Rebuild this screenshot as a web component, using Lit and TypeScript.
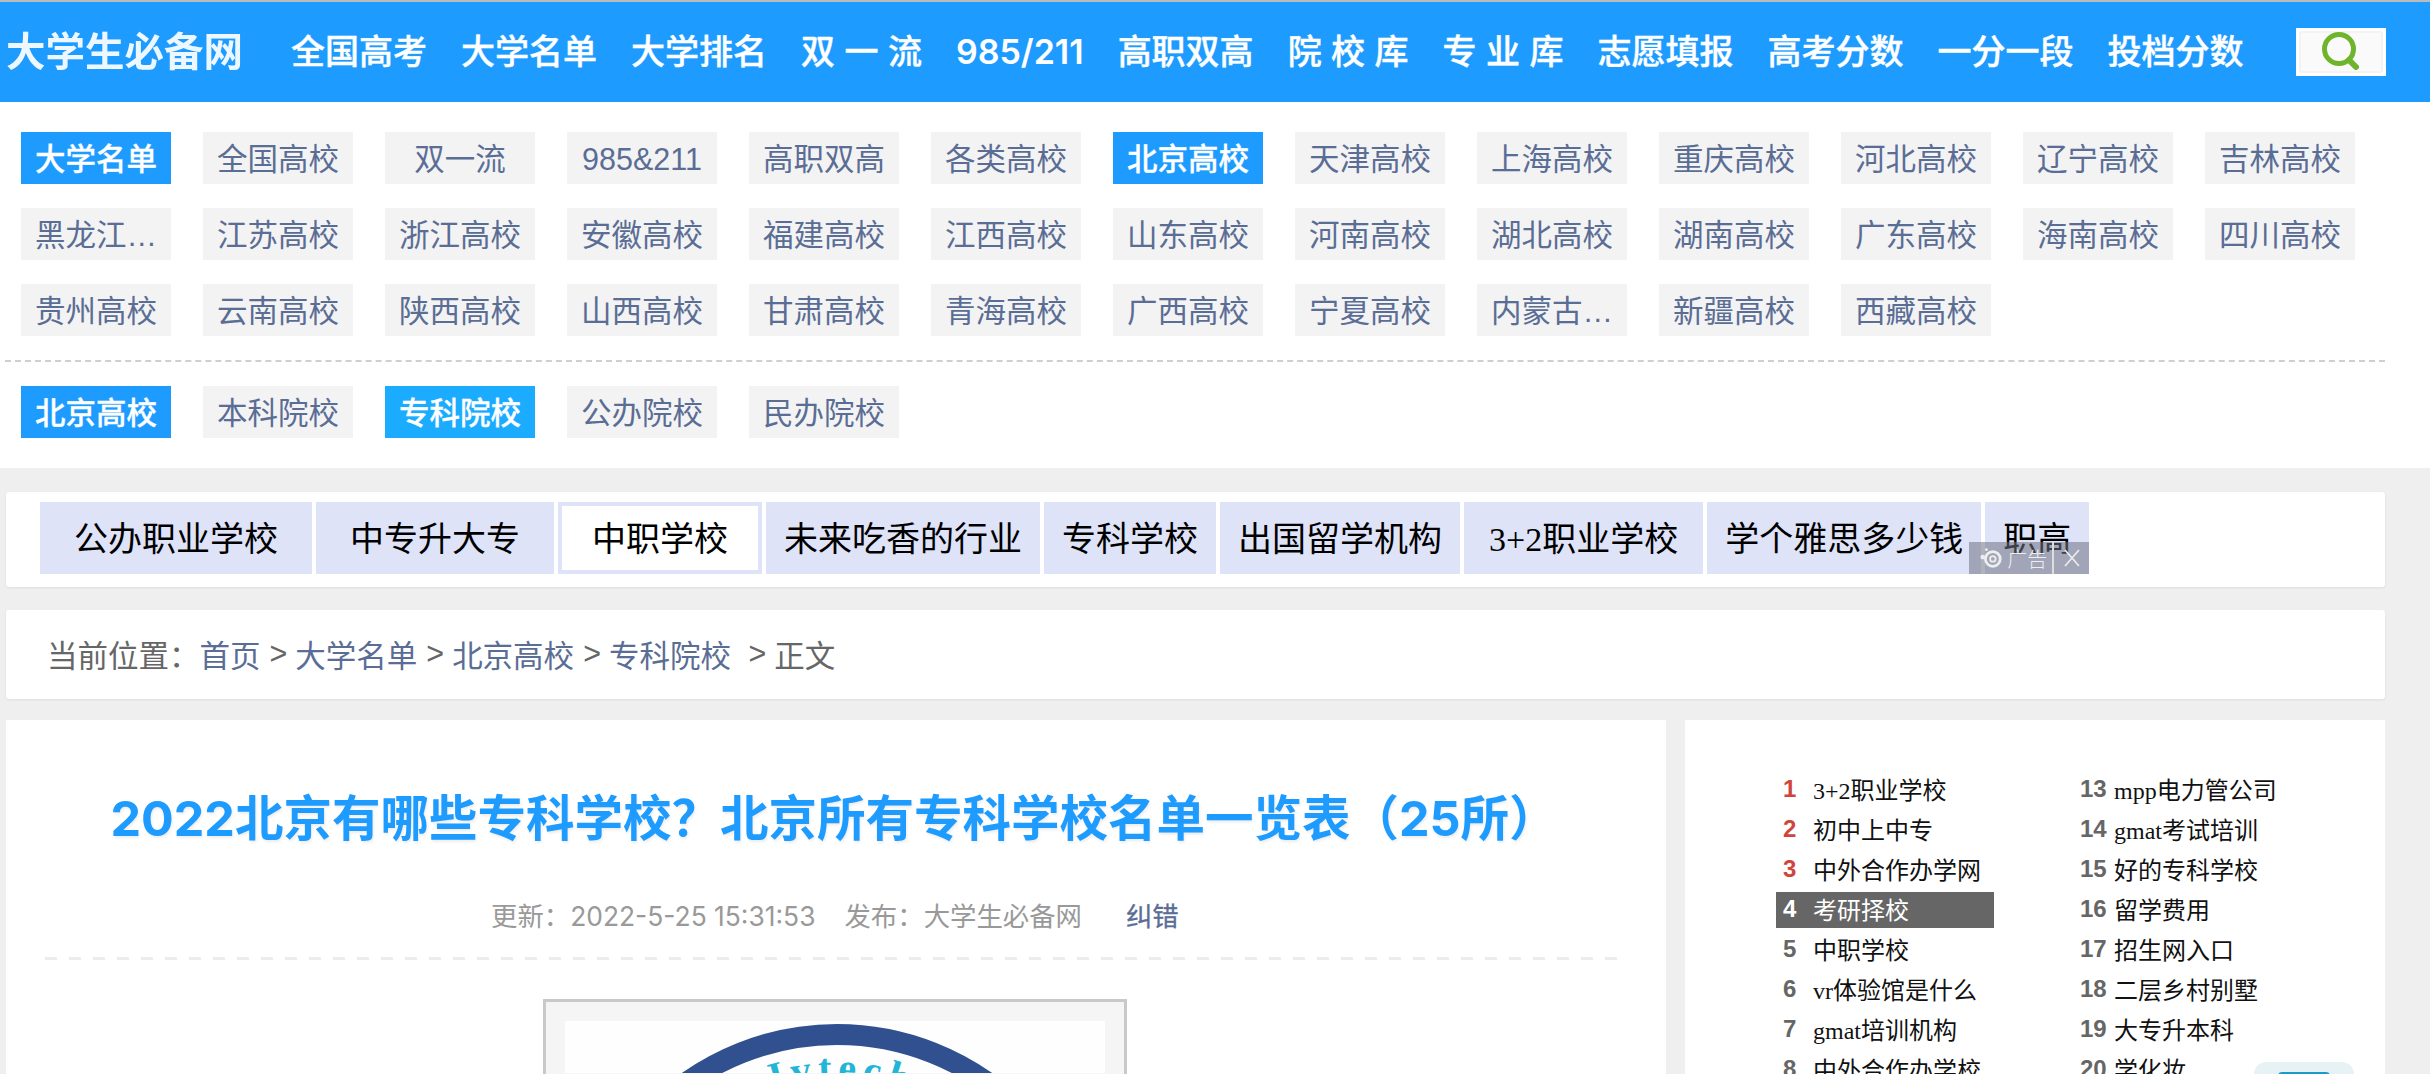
import { LitElement, html, css } from "lit";
import { customElement } from "lit/decorators.js";

const NAV = ["全国高考","大学名单","大学排名","双 一 流","985/211","高职双高","院 校 库","专 业 库","志愿填报","高考分数","一分一段","投档分数"];
const TAGS1 = ["大学名单","全国高校","双一流","985&211","高职双高","各类高校","北京高校","天津高校","上海高校","重庆高校","河北高校","辽宁高校","吉林高校","黑龙江高校","江苏高校","浙江高校","安徽高校","福建高校","江西高校","山东高校","河南高校","湖北高校","湖南高校","广东高校","海南高校","四川高校","贵州高校","云南高校","陕西高校","山西高校","甘肃高校","青海高校","广西高校","宁夏高校","内蒙古高校","新疆高校","西藏高校"];
const ON1 = new Set(["大学名单", "北京高校"]);
const TAGS2 = ["北京高校","本科院校","专科院校","公办院校","民办院校"];
const ADS: [string, string][] = [
  ["公办职业学校","wide"],["中专升大专","wide"],["中职学校","cur"],["未来吃香的行业",""],["专科学校",""],["出国留学机构",""],["3+2职业学校","mid"],["学个雅思多少钱",""],["职高",""],
];
const LIST1 = ["3+2职业学校","初中上中专","中外合作办学网","考研择校","中职学校","vr体验馆是什么","gmat培训机构","中外合作办学校"];
const LIST2 = ["mpp电力管公司","gmat考试培训","好的专科学校","留学费用","招生网入口","二层乡村别墅","大专升本科","学化妆"];

@customElement("app-root")
export class AppRoot extends LitElement {
  static styles = css`
    :host { display: block; width: 2430px; height: 1074px; overflow: hidden; background: #efefef; font-family: "Liberation Sans", "Noto Sans CJK SC", sans-serif; }
    a { text-decoration: none; color: inherit; }
    .top { height: 100px; border-top: 2px solid #b9bcbe; background: #1e9bff; display: flex; align-items: center; color: #fff; }
    .logo { width: 291px; padding-left: 6px; box-sizing: border-box; font-size: 39.5px; font-weight: 700; line-height: 44px; filter: blur(.5px); opacity: .92; white-space: nowrap; flex: none; }
    .nav { display: flex; align-items: center; gap: 34px; font-size: 34px; line-height: 44px; font-weight: 500; -webkit-text-stroke: .4px #fff; white-space: pre; }
    .nav a { display: block; white-space: pre; }
    .nav a.num { font-family: Inter, "Liberation Sans", sans-serif; font-weight: 600; -webkit-text-stroke: 0; }
    .search { flex: none; margin-left: 53px; width: 90px; height: 48px; background: #fff; padding: 3px; box-sizing: border-box; }
    .search div { height: 100%; box-sizing: border-box; background: #fbfafb; border: 2px solid #f3f3f3; border-radius: 3px; display: flex; align-items: center; justify-content: center; }
    .search svg { filter: blur(.5px); }
    .tags { background: #fff; height: 366px; box-sizing: border-box; padding: 30px 0 0 21px; }
    .grid { display: grid; grid-template-columns: repeat(13, 150px); column-gap: 32px; row-gap: 24px; }
    .tag { height: 52px; line-height: 54px; background: #f3f3f3; color: #5a6d95; font-size: 30.5px; text-align: center; padding: 0 14px; box-sizing: border-box; overflow: hidden; white-space: nowrap; text-overflow: ellipsis; }
    .tag.on { background: #1e9bff; color: #fff; font-weight: 500; -webkit-text-stroke: .3px #fff; }
    .tag.cyan { background: #1cacff; color: #fff; font-weight: 500; -webkit-text-stroke: .3px #fff; }
    .dash { height: 0; border-top: 2px dashed #cfcfcf; width: 2380px; margin: 24px 0 24px -16px; }
    .cards { padding: 24px 45px 0 6px; display: flex; flex-direction: column; gap: 23px; }
    .card { background: #fff; box-shadow: 0 1px 3px rgba(0,0,0,.08); border-radius: 3px; }
    .ads { height: 95px; box-sizing: border-box; padding: 10px 0 0 34px; display: flex; }
    .adwrap { position: relative; display: flex; gap: 4px; height: 72px; font-family: "Liberation Serif", "Noto Sans CJK SC", serif; }
    .ad { height: 72px; line-height: 76px; background: #dfe3f8; color: #000; font-size: 34px; padding: 0 18px; white-space: nowrap; box-sizing: border-box; }
    .ad.wide { padding: 0 34px; }
    .ad.mid { padding: 0 25px; }
    .ad.cur { padding: 0 30px; background: #fff; border: 4px solid #dfe3f8; line-height: 68px; }
    .adtag { position: absolute; right: 0; bottom: 0; width: 120px; height: 32px; display: flex; align-items: center; background: rgba(110,115,130,.55); color: #eee; font-family: "Liberation Sans", "Noto Sans CJK SC", sans-serif; font-size: 20px; font-weight: 300; white-space: nowrap; }
    .adlabel { width: 85px; height: 32px; display: flex; align-items: center; box-sizing: border-box; padding-left: 10px; gap: 4px; border-right: 2px solid #ddd; flex: none; }
    .adx { flex: 1; display: flex; align-items: center; justify-content: center; }
    .crumb { height: 89px; box-sizing: border-box; padding: 0 0 2px 41px; display: flex; align-items: center; font-size: 30.5px; color: #666; white-space: pre; }
    .crumb a { color: #5a6d95; }
    .crumb .sep { margin: 0 8px 0 9px; }
    .main { display: flex; gap: 19px; padding: 21px 45px 0 6px; }
    .article { width: 1660px; height: 400px; box-sizing: border-box; background: #fff; padding-top: 66px; }
    h1 { margin: 0; padding-right: 4px; font-family: Inter, "Noto Sans CJK SC", sans-serif; font-size: 48.5px; line-height: 66px; font-weight: 700; color: #1e9bff; text-align: center; text-shadow: 1px 2px 3px rgba(0,0,0,.08); white-space: nowrap; }
    .meta { margin-top: 46px; display: flex; padding-left: 485px; font-family: Inter, "Noto Sans CJK SC", sans-serif; font-size: 26.4px; line-height: 36px; color: #999; white-space: pre; }
    .meta span { margin-left: 29px; }
    .meta a { color: #5a6d95; margin-left: 44px; -webkit-text-stroke: .3px #5a6d95; }
    .line { height: 3px; margin: 23px 0 0 39px; width: 1581px; background: repeating-linear-gradient(90deg, #ececec 0 12px, transparent 12px 24px); }
    .figure { margin: 39px 0 0 537px; width: 584px; height: 100px; box-sizing: border-box; border: 3px solid #c9c9c9; border-bottom: 0; background: #f5f5f5; padding: 19px 19px 0; }
    .figure svg { display: block; width: 540px; height: 52px; background: #fefefe; }
    .side { width: 700px; height: 400px; background: #fff; box-sizing: border-box; padding: 50px 0 0 91px; position: relative; }
    .cols { display: grid; grid-template-columns: 297px 300px; }
    .row { height: 40px; width: 218px; display: flex; align-items: center; box-sizing: border-box; padding: 0 0 3px 7px; font-family: "Liberation Serif", "Noto Sans CJK SC", serif; font-size: 24px; color: #111; white-space: nowrap; }
    .row b { font-family: "Liberation Sans", sans-serif; width: 30px; flex: none; color: #666; font-size: 24px; }
    .row.wide { width: 300px; }
    .row.wide b { width: 34px; }
    .row.red b { color: #d0453a; }
    .row.cur { background: #666; color: #fff; height: 36px; margin: 2px 0; }
    .row.cur b { color: #fff; }
    .float { position: absolute; left: 569px; top: 342px; width: 100px; height: 60px; border-radius: 12px 12px 0 0; background: #e6f2f4; box-sizing: border-box; padding: 10px 0 0 24px; }
    .float i { display: block; width: 52px; height: 30px; border-radius: 4px 4px 0 0; background: #1d9ac8; }
  `;

  render() {
    return html`
      <div class="top">
        <div class="logo">大学生必备网</div>
        <nav class="nav">${NAV.map((t) => html`<a class="${t === "985/211" ? "num" : ""}" href="#">${t}</a>`)}</nav>
        <div class="search"><div>
          <svg width="46" height="42" viewBox="0 0 46 42"><circle cx="21" cy="18" r="14.5" fill="none" stroke="#6fb52c" stroke-width="5"/><path d="M31 29l7 7" stroke="#6fb52c" stroke-width="6" stroke-linecap="round"/></svg>
        </div></div>
      </div>
      <section class="tags">
        <div class="grid">${TAGS1.map((t) => html`<a class="tag ${ON1.has(t) ? "on" : ""}" href="#">${t}</a>`)}</div>
        <div class="dash"></div>
        <div class="grid">${TAGS2.map((t, i) => html`<a class="tag ${i === 0 ? "on" : i === 2 ? "cyan" : ""}" href="#">${t}</a>`)}</div>
      </section>
      <div class="cards">
        <div class="card ads">
          <div class="adwrap">
            ${ADS.map(([t, c]) => html`<a class="ad ${c}" href="#">${t}</a>`)}
            <div class="adtag">
              <div class="adlabel">
                <svg width="24" height="24" viewBox="0 0 26 26"><circle cx="15" cy="14" r="8" fill="none" stroke="#eee" stroke-width="3"/><circle cx="15" cy="14" r="3" fill="none" stroke="#eee" stroke-width="2"/><circle cx="4" cy="12" r="2.5" fill="#eee"/><circle cx="8" cy="4" r="1.5" fill="#eee"/></svg>
                <span>广告</span>
              </div>
              <div class="adx"><svg width="20" height="20" viewBox="0 0 20 20"><path d="M3 2l14 16M17 2L3 18" stroke="#eee" stroke-width="1.6" fill="none"/></svg></div>
            </div>
          </div>
        </div>
        <div class="card crumb">当前位置：<a href="#">首页</a><span class="sep">&gt;</span><a href="#">大学名单</a><span class="sep">&gt;</span><a href="#">北京高校</a><span class="sep">&gt;</span><a href="#">专科院校</a><span class="sep"> &gt;</span>正文</div>
      </div>
      <div class="main">
        <article class="article">
          <h1>2022北京有哪些专科学校？北京所有专科学校名单一览表（25所）</h1>
          <div class="meta">更新：2022-5-25 15:31:53<span>发布：大学生必备网</span><a href="#">纠错</a></div>
          <div class="line"></div>
          <div class="figure">
            <svg viewBox="0 0 540 52">
              <defs><path id="arc" d="M 59 273 A 213 213 0 0 1 485 273"></path></defs>
              <circle cx="272" cy="273" r="259.5" fill="none" stroke="#30508f" stroke-width="21"/>
              <text font-family="Liberation Serif" font-size="40" font-weight="700" fill="#22b5d8" letter-spacing="6"><textPath href="#arc" startOffset="264">Jvtech</textPath></text>
            </svg>
          </div>
        </article>
        <aside class="side">
          <div class="cols">
            <div>${LIST1.map((t, i) => html`<div class="row ${i < 3 ? "red" : ""} ${i === 3 ? "cur" : ""}"><b>${i + 1}</b>${t}</div>`)}</div>
            <div>${LIST2.map((t, i) => html`<div class="row wide"><b>${i + 13}</b>${t}</div>`)}</div>
          </div>
          <div class="float"><i></i></div>
        </aside>
      </div>
    `;
  }
}
